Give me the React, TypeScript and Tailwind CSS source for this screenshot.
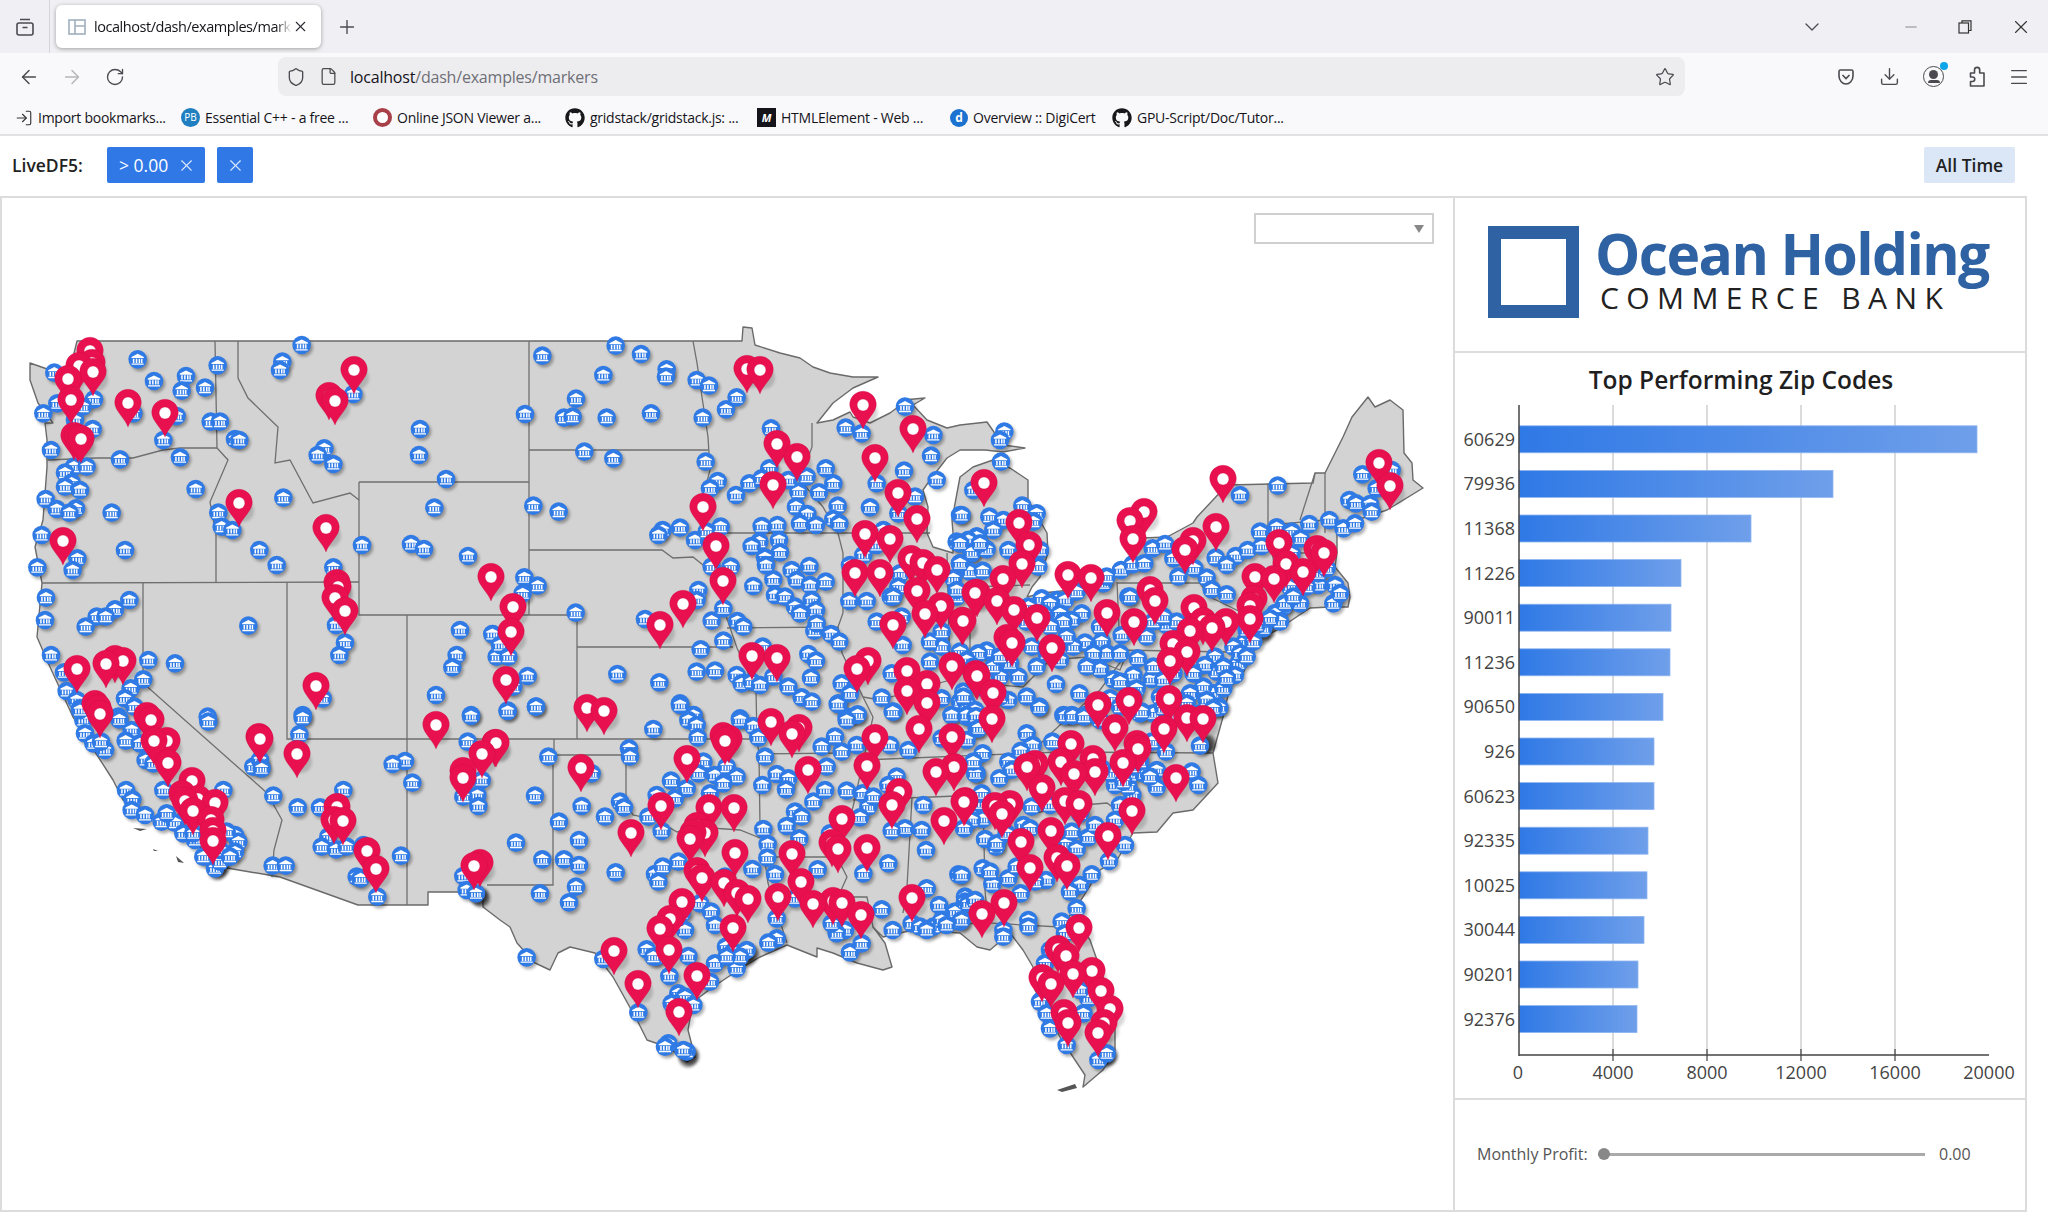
import React from "react";
import { ArrowLeft, ArrowRight, RotateCw, Shield, File, Star, Download, X, Plus, ChevronDown, Minus, Menu, LogIn } from "lucide-react";
import { FaGithub } from "react-icons/fa";

type P = [number, number];
const tile = (ox: number, oy: number, a: number[]): P[] => {
  const r: P[] = [];
  for (let i = 0; i < a.length; i += 2) r.push([ox + a[i] / 3, oy + a[i + 1] / 3]);
  return r;
};

const BLUE: P[] = [
  ...tile(0, 320, [413,118,653,136,905,75,847,125,840,150,163,158,462,183,558,168,545,212,615,203,282,238,248,260,172,250,130,280,225,300,278,327,530,288,400,280,632,305,660,305,490,360,1060,222,705,357,718,360,1260,327,1257,405,973,385,953,405,1000,432,153,390,360,418,540,412,222,440,260,440,195,458,215,488,240,510,195,500,137,537,587,507,850,533,1338,477,1303,563,170,567,228,565,208,578,655,578,665,620,697,630,335,578,125,645,1086,675,1233,672,1272,687,1404,708,375,690,778,690,830,735,232,715,218,750,112,742,1000,742,138,833,135,900,388,840,345,868,290,890,317,890,257,920,745,917,1008,915,1035,968,1018,1005,1380,930,1478,942,1370,1005,1357,1042,1490,1010,153,1005,445,1020,525,1030,192,1057,430,1078,392,1105,200,1113,230,1140,375,1135,403,1160,623,1190,908,1185,1308,1125,1413,1185,968,1135,355,1190,240,1165]),
  ...tile(480, 320, [407,77,483,102,187,107,560,148,558,170,370,165,650,180,687,197,770,232,738,268,288,236,135,282,252,293,278,290,380,293,513,280,668,293,313,395,400,415,873,325,1097,323,1145,340,1275,260,1360,345,1353,407,677,425,713,483,690,505,768,525,808,490,868,445,845,475,1037,445,980,470,1060,490,1017,517,955,515,925,480,948,560,1073,557,1060,597,1078,610,982,582,960,610,1008,615,1170,562,1190,490,1272,452,1370,480,1305,530,1255,580,1440,585,160,557,236,575,548,630,535,645,600,623,645,660,680,635,722,620,845,618,892,615,838,665,815,678,897,660,900,697,855,712,858,735,752,740,695,740,988,738,935,750,880,778,950,780,990,795,1037,785,820,798,885,825,915,830,995,840,945,860,960,880,1008,870,655,810,650,840,133,772,173,797,128,820,287,878,730,865,695,902,772,903,790,920,495,897,730,962,1003,932,1053,942,1078,965,1010,910,1190,905,1265,890,37,942,60,975,85,1010,143,1068,100,1100,662,988,412,1062,538,1087,650,1055,705,1052,770,1065,785,1090,815,1085,848,980,880,1070,925,1100,840,1095,985,1002,1008,1022,993,1073,965,1132,995,1145,1075,1150,1085,1090,1110,1120,1205,1133,1240,1175,1235,1060,1268,975,168,1160,83,1172,600,1150,640,1185,1130,1185,1100,1190,780,1195,1450,1115,1415,1185,1385,1135,1440,1145,1350,1025,1385,980,1350,965,1440,995,1385,935,1430,665,1475,700,1440,730,1420,775,1430,830,1465,660,1490,650,1430,810,1232,830,1160,843,1108,843,1110,735,1150,705,1190,675,1210,630,1260,760,1255,800,1240,830]),
  ...tile(960, 320, [133,335,120,360,123,425,40,510,187,557,230,580,220,605,88,590,130,600,100,630,5,585,50,650,25,660,35,697,80,688,145,690,0,670,60,670,30,755,68,752,0,730,235,740,240,690,245,835,205,860,290,840,315,840,270,850,300,880,365,880,335,900,310,905,350,815,430,790,440,770,505,830,420,920,425,965,485,945,375,968,340,980,440,1000,480,1000,533,1015,420,1047,460,1078,520,1065,575,1077,530,1105,288,1092,358,1120,230,1040,120,1070,80,992,55,1000,215,980,272,920,175,1070,150,1030,100,1040,20,1020,40,1040,145,1140,120,1130,20,1150,45,1170,238,1160,310,1185,335,1185,375,1185,483,750,518,733,553,730,578,685,615,672,640,715,703,745,655,770,740,773,755,808,800,823,767,713,827,708,800,735,863,690,905,678,900,635,950,622,995,635,1022,655,1048,612,1108,600,1150,625,1185,610,995,700,840,525,953,497,1207,463,1295,450,1250,505,1168,540,1188,550,1230,552,1235,575,1120,850,1075,795,1125,795,1140,820,1020,850,990,800,970,860,945,880,910,925,855,965,880,965,820,980,765,1010,835,1030,770,1055,825,1065,735,1035,700,1060,650,1000,640,1060,580,1040,610,1080,760,1120,790,1105,730,1100,775,1160,690,1120,720,1180,620,915,650,905,580,905,610,890,510,830,560,950,450,1135,540,1180,580,1180,650,1170,610,1150,960,905,930,895,975,850,1000,830,1040,800,1075,760,1100,745,890,915,860,930,840,1000,790,1040,860,1010,800,1075,740,1140,680,1150,600,1130,520,1130,480,1085,400,1000,380,1040,320,950,250,880,200,905,160,960,120,1010,60,1100,10,1130,200,1130,260,1000,300,1020]),
  ...tile(0, 700, [625,65,908,53,898,103,1413,48,1403,125,1215,183,1178,192,1237,248,1445,240,1432,285,1435,318,1390,290,358,58,395,90,377,122,437,180,250,60,255,100,280,130,315,150,303,125,420,130,460,190,490,270,670,270,378,270,397,298,395,330,435,345,485,365,525,368,550,400,585,420,705,405,715,425,705,455,625,470,645,505,660,485,680,395,820,287,780,195,760,200,893,322,960,322,1030,270,985,410,965,440,1008,448,1040,440,1203,467,1090,435,1070,530,1082,535,1132,590,818,497,857,497,1390,528,1400,570,1428,580,240,30,780,180,785,205,660,450,690,470,610,470,580,400,500,340]),
  ...tile(480, 700, [83,33,168,20,600,15,640,45,625,60,650,75,653,112,520,87,780,60,820,78,835,112,855,170,1073,12,1133,43,1100,60,1238,35,1230,135,1285,150,1130,135,1085,155,1025,140,1065,110,1040,200,205,170,447,145,450,170,335,220,165,287,305,318,375,350,420,305,432,322,237,365,297,420,108,428,187,478,252,478,297,495,407,517,288,560,180,580,267,607,670,185,655,220,705,225,740,200,770,230,730,250,573,242,620,265,585,295,530,285,690,280,505,350,545,393,890,222,925,235,847,255,918,268,1000,305,1035,270,1100,272,1148,280,1165,320,1140,352,945,335,965,350,920,378,850,387,863,432,862,473,958,415,817,507,885,522,525,522,548,500,535,545,595,485,735,530,660,610,693,635,705,675,1013,508,1225,490,1150,520,1205,628,1095,690,1070,700,1110,757,1145,730,1238,690,1275,385,1325,390,1235,392,1338,450,1435,523,1340,565,1377,615,1455,590,1425,635,1440,665,1360,680,1295,670,1320,680,1385,660,1055,670,945,595,890,655,890,715,865,728,738,740,760,755,800,750,770,805,705,790,625,768,615,690,605,640,500,748,370,777,530,770,568,828,140,772,475,937,595,880,615,890,575,910,640,915,690,845,565,1030,620,1055,1330,315,1250,230,1225,255,1180,290,1050,400,1415,45,1460,50,1490,85,1490,220,1480,320,1500,310,1385,115,780,770,740,770,1400,675,1340,690,555,1040,610,1050,520,770]),
  ...tile(960, 700, [238,22,315,47,338,47,372,50,20,45,48,48,55,85,20,120,200,100,218,135,277,125,182,153,68,160,145,185,155,210,45,220,40,185,118,235,65,280,68,357,35,360,12,385,75,417,108,440,190,375,215,320,270,315,210,385,320,430,350,447,385,412,405,375,465,360,480,315,517,285,505,260,465,255,590,262,590,210,550,220,455,220,695,215,715,255,618,155,720,137,778,22,545,35,575,125,495,435,447,483,395,523,360,555,330,575,350,625,305,665,315,700,258,540,225,545,145,535,97,552,68,505,90,515,182,580,170,500,15,605,25,610,45,600,5,660,205,660,205,680,130,690,130,710,270,750,255,790,245,900,240,905,260,940,270,985,320,1035,370,940,385,895,360,870,415,1080,440,1060,5,525,510,225,425,205,490,245,520,200,570,230,540,185,650,40,710,60,760,25,610,25,480,20,420,60,110,430,140,400,360,340,335,395]),
];

const PINS: P[] = [
  [90,375],[92,387],[93,396],[68,403],[79,390],[71,424],[128,427],[165,437],[329,420],[335,425],[354,394],[81,463],[74,460],[78,462],[239,527],[326,552],[63,565],[338,611],[337,607],[335,622],[345,635],[316,710],[491,601],[77,693],[106,688],[115,683],[123,685],
  [100,738],[98,732],[95,728],[151,744],[147,740],[167,765],[154,765],[168,787],[192,805],[182,818],[185,825],[193,835],[198,823],[215,827],[211,844],[213,855],[213,865],[259,761],[260,763],[297,778],[436,749],[337,831],[334,844],[343,845],[367,875],[376,893],[482,778],[463,795],[463,802],[495,767],[474,890],[480,887],
  [760,394],[747,393],[863,429],[913,453],[777,468],[797,481],[875,482],[773,509],[898,517],[703,531],[917,543],[865,558],[890,563],[716,570],[911,583],[923,587],[937,594],[723,605],[855,597],[880,597],[917,615],[977,617],[513,631],[683,628],[941,630],[925,638],[962,645],[511,656],[660,649],[893,649],[752,680],[777,682],[857,693],[868,685],[907,695],[952,690],[977,700],[506,704],[927,708],[907,715],[927,727],[587,732],[604,735],
  [496,767],[687,783],[729,763],[723,760],[725,765],[771,746],[799,752],[792,758],[875,762],[919,753],[952,761],[581,792],[808,794],[867,790],[954,791],[936,796],[899,816],[892,829],[964,826],[661,830],[709,832],[734,832],[842,843],[944,845],[631,857],[705,857],[693,857],[697,850],[832,867],[838,873],[867,872],[690,863],[735,877],[792,878],[697,895],[702,902],[724,907],[748,923],[801,906],[682,926],[912,922],[778,921],[813,928],[833,925],[842,927],[861,939],[733,952],[737,917],[660,953],[670,943],[669,974],[614,975],[638,1008],[697,1000],[679,1036],
  [1223,503],[1379,487],[1390,510],[1144,536],[1130,545],[1133,563],[984,507],[1019,547],[1216,551],[1193,565],[1185,574],[1279,567],[1324,577],[1317,573],[1029,569],[1022,588],[1003,603],[1068,599],[1091,602],[975,617],[1303,596],[1286,588],[1274,603],[1255,601],[1254,623],[1250,630],[1250,643],[1107,637],[1150,614],[1155,625],[1134,646],[1037,642],[997,625],[1014,634],[1007,662],[1012,667],[1052,672],[1203,645],[1226,646],[1194,632],[1212,652],[1187,676],[1170,685],[1173,668],[1190,655],[976,698],[993,717],[963,645],[1098,729],[1129,725],[1169,723],
  [1187,742],[1203,743],[992,743],[1115,752],[1164,753],[1071,768],[1137,768],[1138,773],[1093,783],[1027,791],[1035,788],[1061,786],[1123,787],[1074,798],[1095,796],[1042,812],[1176,802],[965,825],[1010,828],[1002,838],[995,830],[1065,825],[1079,828],[1132,835],[1051,855],[1108,860],[1021,866],[1057,882],[1067,890],[1030,892],[1004,927],[982,938],[1079,952],[1066,980],[1058,973],[1092,995],[1073,998],[1051,1008],[1042,1002],[1101,1015],[1064,1037],[1068,1047],[1110,1033],[1104,1047],[1098,1057],
].sort((a, b) => a[1] - b[1]) as P[];

const BLOTS: P[] = [[1106,1058],[1108,1056],[1262,635],[1266,631],[479,896],[481,898],[218,870],[220,868],[746,958],[750,954],[688,1058],[690,1056],[1205,745],[1207,744]];

const OUTLINE = "M30 363L50 370L70 370L77 341L238 341L693 341L742 341L743 327L752 328L755 345L780 353L800 358L813 367L830 373L853 377L878 377L853 388L833 403L817 423L833 420L850 412L853 417L870 423L890 413L898 407L903 400L925 398L913 405L927 420L947 428L960 425L987 422L1003 445L1025 448L1003 452L985 450L960 450L947 458L930 480L923 490L928 507L927 533L933 547L953 553L953 533L952 520L957 493L960 477L973 467L993 460L1010 468L1028 480L1028 500L1047 533L1048 553L1040 577L1032 587L1027 597L1043 593L1070 590L1113 580L1127 560L1143 538L1167 537L1193 523L1197 517L1227 485L1313 483L1315 473L1325 473L1343 437L1352 417L1368 397L1375 407L1390 400L1403 410L1404 453L1412 463L1413 480L1423 488L1387 510L1357 520L1337 533L1337 553L1335 567L1348 583L1350 597L1348 607L1330 607L1310 608L1277 630L1257 640L1253 653L1243 673L1230 687L1223 717L1213 753L1218 783L1193 810L1173 813L1157 832L1133 833L1117 860L1100 870L1083 897L1072 913L1090 940L1103 977L1115 1017L1115 1050L1103 1070L1083 1087L1085 1075L1075 1060L1060 1037L1035 990L1033 967L1023 950L1010 933L990 950L977 947L960 933L913 930L883 937L873 927L885 943L892 967L883 970L857 963L833 953L817 948L817 957L787 945L760 957L743 967L713 987L693 1002L688 1030L695 1057L687 1062L670 1048L647 1040L637 1020L613 977L595 953L570 947L558 953L550 970L535 963L517 943L510 927L500 920L483 907L483 892L428 892L428 905L408 905L358 905L280 877L227 868L215 870L207 853L182 833L163 823L140 812L123 800L113 780L97 755L73 717L50 667L37 637L42 583L35 547L43 520L47 467L47 440L45 423L53 423L38 403L30 380Z";

const BORDERS = [
  "M48 460L95 458L133 458L163 450L180 448L217 448",
  "M215 341L217 448L228 460L210 502L216 533L216 582",
  "M42 583L359 582",
  "M238 341L238 378L248 398L278 427L275 463L290 460L313 503L350 493L359 500",
  "M359 482L359 615L577 615",
  "M359 482L529 482","M529 341L529 615",
  "M529 450L708 450","M529 550L662 550L673 558L693 557L713 573",
  "M143 582L143 683L267 793L282 820L274 850L272 877",
  "M287 582L287 739L554 739","M407 615L407 905","M577 615L577 739",
  "M577 647L733 647","M554 739L757 739","M554 739L554 755L626 755L626 802L633 815L657 820L677 832L697 827L740 830L760 838",
  "M553 755L553 885L487 885",
  "M693 341L697 363L702 397L708 437L710 470L703 497L707 533L713 567L725 613L737 648L756 690L757 739L759 754L760 827L768 883L773 900L787 943",
  "M707 533L838 533L930 533","M812 423L812 447L800 480L823 507L838 533L843 553L843 613L838 627L727 628",
  "M759 754L850 753","M768 857L837 857","M838 627L842 653L863 697L873 717L853 807L837 857L847 877L838 897L867 897L873 927",
  "M853 800L983 795L1037 813L1060 807L1107 803L1130 820",
  "M912 798L907 887L903 913","M983 795L985 890L988 923L1060 927L1072 913","M925 925L988 923",
  "M947 553L950 680","M970 587L970 670","M970 587L1030 585",
  "M863 697L880 700L950 680L970 670L1000 685L1023 687L1050 660L1087 657L1120 670L1127 653",
  "M863 760L1060 752L1213 753","M1037 813L1023 760L1060 725L1100 690L1127 653",
  "M1117 582L1120 650L1227 652","M1117 583L1200 583L1210 597L1257 620",
  "M1268 483L1268 527L1275 570","M1268 525L1325 520","M1275 553L1330 553","M1325 473L1325 533","M1315 473L1300 520",
];

const ISLANDS = [
  "M133 828L147 829L140 831Z","M153 849L158 851L154 851Z","M176 856L184 863L178 862Z",
  "M1057 1090L1075 1084L1077 1088L1062 1092Z",
];

const ZIP: [string, number][] = [
  ["60629",1978],["79936",1834],["11368",1752],["11226",1682],["90011",1672],["11236",1671],["90650",1664],["926",1655],["60623",1655],["92335",1649],["10025",1648],["30044",1645],["90201",1639],["92376",1638],
];

const font = "font-['Open_Sans',sans-serif]";
const ui = "font-['Open_Sans','Noto_Sans',sans-serif]";

function Bookmark({ w, icon, text }: { w: string; icon: React.ReactNode; text: string }) {
  return (
    <div className={`flex items-center gap-[5px] shrink-0 ${w}`}>
      {icon}
      <span className="text-[14px] tracking-[-0.25px] text-[#15141a] whitespace-nowrap">{text}</span>
    </div>
  );
}

function MapSvg() {
  return (
    <svg viewBox="0 196 1453 1015" className="w-[1453px] h-[1015px] block">
      <defs>
        <filter id="bl" x="-5%" y="-5%" width="110%" height="110%"><feGaussianBlur stdDeviation="1.7" /></filter>
        <g id="bank">
          <circle r="9.3" fill="#2f7ae5" />
          <path d="M-6.2 -2.4L0 -5.6L6.2 -2.4V-1.3H-6.2Z M-4.8 -0.7H-3.3V3.6H-4.8Z M-1.9 -0.7H-0.4V3.6H-1.9Z M1 -0.7H2.5V3.6H1Z M3.4 -0.7H4.8V3.6H3.4Z M-6 4.2H6V5.5H-6Z" fill="#fff" />
        </g>
        <g id="pin">
          <path d="M0 0C-3 -9 -13.3 -16 -13.3 -24.5A13.3 13.3 0 1 1 13.3 -24.5C13.3 -16 3 -9 0 0Z" fill="#e8104f" />
          <circle cy="-24" r="5.9" fill="#fff" />
        </g>
      </defs>
      <path d={OUTLINE} fill="#d3d3d3" stroke="#6a6a6a" strokeWidth="1.4" strokeLinejoin="round" />
      {BORDERS.map((d, i) => <path key={i} d={d} fill="none" stroke="#6f6f6f" strokeWidth="1.3" />)}
      {ISLANDS.map((d, i) => <path key={i} d={d} fill="#555" />)}
      <g filter="url(#bl)">
        {BLUE.map(([x, y], i) => <circle key={i} cx={x + 2} cy={y + 2.5} r="9.3" fill="#000" fillOpacity="0.32" />)}
        {PINS.map(([x, y], i) => <circle key={i} cx={x + 4} cy={y - 16} r="11" fill="#000" fillOpacity="0.16" />)}
        {BLOTS.map(([x, y], i) => <circle key={i} cx={x} cy={y} r="9.5" fill="#000" fillOpacity="0.4" />)}
      </g>
      {BLUE.map(([x, y], i) => <use key={i} href="#bank" x={x} y={y} />)}
      {PINS.map(([x, y], i) => <use key={i} href="#pin" x={x} y={y} stroke="#c90d45" strokeWidth="0.3" />)}
    </svg>
  );
}

function ChartSvg() {
  const ticks = [4000, 8000, 12000, 16000];
  return (
    <svg viewBox="1456 353 570 747" className="w-[570px] h-[747px] block">
      <defs>
        <linearGradient id="barg" x1="0" x2="1" y1="0" y2="0">
          <stop offset="0" stopColor="#2f79e6" />
          <stop offset="1" stopColor="#6f9fea" />
        </linearGradient>
      </defs>
      <text x="1742" y="389" textAnchor="middle" fontSize="24.5" fontWeight="600" fill="#1f1f1f" fontFamily="Open Sans">Top Performing Zip Codes</text>
      {ticks.map((t) => {
        const x = 1520 + t * 0.0235;
        return <line key={t} x1={x} x2={x} y1="405" y2="1055" stroke="#cfcfcf" strokeWidth="1.5" />;
      })}
      {ZIP.map(([z, end], i) => {
        const cy = 439.3 + i * 44.6;
        return (
          <g key={z + i}>
            <rect x="1520" y={cy - 13.5} width={end - 1520} height="27" fill="url(#barg)" stroke="#8fb6f0" strokeWidth="0.8" />
            <text x="1516" y={cy + 6.5} textAnchor="end" fontSize="18" fill="#444" fontFamily="Open Sans">{z}</text>
          </g>
        );
      })}
      <line x1="1520" x2="1520" y1="405" y2="1056" stroke="#444" strokeWidth="1.5" />
      <line x1="1520" x2="1990" y1="1055" y2="1055" stroke="#444" strokeWidth="1.5" />
      {ticks.map((t) => {
        const x = 1520 + t * 0.0235;
        return <line key={t} x1={x} x2={x} y1="1049" y2="1061" stroke="#444" strokeWidth="1.2" />;
      })}
      {[0, 4000, 8000, 12000, 16000, 20000].map((t) => (
        <text key={t} x={t === 0 ? 1519 : 1520 + t * 0.0235} y="1079" textAnchor="middle" fontSize="18" fill="#444" fontFamily="Open Sans">{t}</text>
      ))}
    </svg>
  );
}

export default function App() {
  return (
    <div className={`w-[2048px] h-[1232px] bg-white overflow-hidden flex flex-col ${ui}`}>
      {/* tab strip */}
      <div className="h-[53px] bg-[#f0f0f4] flex items-stretch shrink-0">
        <div className="w-[50px] border-r border-[#d4d4da] flex items-center justify-center">
          <svg width="22" height="22" viewBox="0 0 22 22" fill="none" stroke="#4a4a50" strokeWidth="1.6">
            <rect x="3" y="7" width="16" height="12" rx="2" />
            <path d="M6 3.5H16M8.5 11.5H13.5" />
          </svg>
        </div>
        <div className="ml-[6px] mt-[5px] w-[265px] h-[43px] bg-white rounded-[6px] shadow-[0_1px_4px_rgba(0,0,0,0.35)] flex items-center pl-[12px] pr-[12px]">
          <svg width="18" height="16" viewBox="0 0 18 16" fill="none" stroke="#9fb0bd" strokeWidth="1.6" className="shrink-0">
            <rect x="1" y="1" width="16" height="14" />
            <path d="M7 1V15M7 7H17" />
          </svg>
          <span className="ml-[8px] w-[199px] overflow-hidden whitespace-nowrap text-[14.5px] tracking-[-0.45px] text-[#15141a] [mask-image:linear-gradient(to_right,#000_92%,transparent)]">localhost/dash/examples/markers</span>
          <X size={17} strokeWidth={1.5} className="ml-auto text-[#2b2a33] shrink-0" />
        </div>
        <div className="ml-[15px] flex items-center"><Plus size={22} strokeWidth={1.5} className="text-[#4a4a50]" /></div>
        <div className="ml-auto flex items-center text-[#4a4a50]">
          <ChevronDown size={24} strokeWidth={1.3} />
          <Minus size={18} strokeWidth={1.3} className="ml-[78px] text-[#888]" />
          <svg width="16" height="16" viewBox="0 0 16 16" fill="none" stroke="#333" strokeWidth="1.2" className="ml-[37px]">
            <rect x="2" y="4" width="9.5" height="10" /><path d="M5 4V1.8H14V11.5H11.5" />
          </svg>
          <X size={22} strokeWidth={1.2} className="ml-[37px] mr-[16px] text-[#333]" />
        </div>
      </div>
      {/* nav bar */}
      <div className="h-[50px] bg-[#f9f9fb] flex items-center shrink-0 pb-[3px] text-[#4a4a50]">
        <ArrowLeft size={22} strokeWidth={1.6} className="ml-[18px]" />
        <ArrowRight size={22} strokeWidth={1.6} className="ml-[21px] text-[#b6b6ba]" />
        <RotateCw size={20} strokeWidth={1.6} className="ml-[22px]" />
        <div className="ml-[153px] w-[1407px] h-[39px] bg-[#ededf0] rounded-[8px] flex items-center">
          <Shield size={20} strokeWidth={1.6} className="ml-[8px]" />
          <File size={19} strokeWidth={1.6} className="ml-[13px]" />
          <span className="ml-[12px] text-[16px] tracking-[-0.2px] text-[#15141a]">localhost<span className="text-[#6f6f76]">/dash/examples/markers</span></span>
          <Star size={20} strokeWidth={1.5} className="ml-auto mr-[10px]" />
        </div>
        <svg width="20" height="20" viewBox="0 0 20 20" fill="none" stroke="#4a4a50" strokeWidth="1.6" className="ml-[151px]">
          <path d="M3 4.5C3 3.5 3.6 3 4.5 3H15.5C16.4 3 17 3.5 17 4.5V9C17 13.5 13.5 17 10 17C6.5 17 3 13.5 3 9Z" /><path d="M6.5 8L10 11.5L13.5 8" />
        </svg>
        <Download size={21} strokeWidth={1.6} className="ml-[23px]" />
        <div className="relative ml-[23px] w-[21px] h-[21px] rounded-full border-[1.6px] border-[#4a4a50] flex flex-col items-center justify-center overflow-visible">
          <div className="w-[9px] h-[9px] rounded-full bg-[#4a4a50]" />
          <div className="w-[12px] h-[3px] rounded-t-full bg-[#4a4a50] mt-[1px]" />
          <div className="absolute -top-[5px] -right-[5px] w-[8px] h-[8px] rounded-full bg-[#0ea5e9]" />
        </div>
        <svg width="21" height="22" viewBox="0 0 21 22" fill="none" stroke="#4a4a50" strokeWidth="1.6" strokeLinejoin="round" className="ml-[22px]">
          <path d="M8.5 5.5V4a2.6 2.6 0 0 1 5.2 0V7H18V20H4.5V15.5H6.5a2.2 2.2 0 0 0 0-4.5H4.5V7H8.5Z" />
        </svg>
        <Menu size={22} strokeWidth={1.5} className="ml-[21px] mr-[18px]" />
      </div>
      {/* bookmarks */}
      <div className="h-[33px] bg-[#f9f9fb] border-b-2 border-[#e2e2e6] flex items-center pl-[15px] pb-[2px] shrink-0">
        <Bookmark w="w-[166px]" icon={<LogIn size={18} strokeWidth={1.5} className="text-[#333]" />} text="Import bookmarks..." />
        <Bookmark w="w-[192px]" icon={<div className="w-[19px] h-[19px] rounded-full bg-[#1f7fc0] text-white text-[10px] leading-[19px] text-center">PB</div>} text="Essential C++ - a free ..." />
        <Bookmark w="w-[192px]" icon={<div className="w-[19px] h-[19px] rounded-full border-[4px] border-[#a8404a] bg-white" />} text="Online JSON Viewer a..." />
        <Bookmark w="w-[192px]" icon={<FaGithub size={20} className="text-[#18171c]" />} text="gridstack/gridstack.js: ..." />
        <Bookmark w="w-[193px]" icon={<div className="w-[19px] h-[19px] bg-[#15141a] text-white text-[11px] italic font-bold leading-[19px] text-center">M</div>} text="HTMLElement - Web ..." />
        <Bookmark w="w-[162px]" icon={<div className="w-[18px] h-[18px] rounded-full bg-[#1b72d0] text-white text-[12px] font-bold leading-[17px] text-center">d</div>} text="Overview :: DigiCert" />
        <Bookmark w="w-[190px]" icon={<FaGithub size={20} className="text-[#18171c]" />} text="GPU-Script/Doc/Tutor..." />
      </div>
      {/* filter row */}
      <div className={`h-[60px] flex items-center pl-[12px] pr-[33px] pb-[2px] shrink-0 ${font}`}>
        <span className="text-[17.5px] font-semibold text-[#222] w-[95px]">LiveDF5:</span>
        <div className="w-[98px] h-[36px] bg-[#2f78e6] rounded-[2px] flex items-center pl-[12px] text-white">
          <span className="text-[17.5px] font-medium">&gt; 0.00</span>
          <X size={19} strokeWidth={1.4} className="ml-[9px] text-[#dbe7fb]" />
        </div>
        <div className="ml-[12px] w-[36px] h-[36px] bg-[#2f78e6] rounded-[2px] flex items-center justify-center text-white">
          <X size={19} strokeWidth={1.4} className="text-[#dbe7fb]" />
        </div>
        <div className="ml-auto w-[91px] h-[36px] bg-[#dbe7f6] rounded-[2px] flex items-center justify-center text-[17.5px] font-semibold text-[#222]">All Time</div>
      </div>
      {/* panels */}
      <div className={`w-[2027px] h-[1016px] border-2 border-[#dcdcdc] flex shrink-0 ${font}`}>
        <div className="relative w-[1451px] shrink-0 overflow-hidden">
          <div className="-ml-[2px] -mt-[2px]"><MapSvg /></div>
          <div className="absolute left-[1252px] top-[15px] w-[180px] h-[31px] bg-white border-2 border-[#d0d0d0] flex items-center justify-end pr-[8px]">
            <div className="w-0 h-0 border-l-[5px] border-r-[5px] border-t-[8px] border-l-transparent border-r-transparent border-t-[#888]" />
          </div>
        </div>
        <div className="flex-1 border-l-2 border-[#dcdcdc] flex flex-col">
          <div className="h-[155px] border-b-2 border-[#dcdcdc] flex items-start pl-[33px] pt-[28px] shrink-0">
            <div className="w-[91px] h-[92px] border-[13px] border-[#2e62a3] shrink-0" />
            <div className="ml-[16px] mt-[2px] flex flex-col">
              <span className="text-[57px] leading-[50px] font-bold tracking-[-1.6px] text-[#2e62a3] whitespace-nowrap">Ocean Holding</span>
              <span className="mt-[5px] ml-[5px] text-[30px] leading-[30px] tracking-[7.4px] text-[#222] whitespace-nowrap">COMMERCE BANK</span>
            </div>
          </div>
          <div className="h-[747px] border-b-2 border-[#dcdcdc] shrink-0 -mr-[2px]"><ChartSvg /></div>
          <div className="flex-1 flex items-center pl-[22px] text-[16px] text-[#555] pb-[2px]">
            <span className="w-[124px]">Monthly Profit:</span>
            <div className="relative w-[327px] h-[3px] bg-[#aaa] -ml-[3px]">
              <div className="absolute left-0 -top-[4.5px] w-[12px] h-[12px] rounded-full bg-[#888]" />
            </div>
            <span className="ml-[14px]">0.00</span>
          </div>
        </div>
      </div>
    </div>
  );
}
